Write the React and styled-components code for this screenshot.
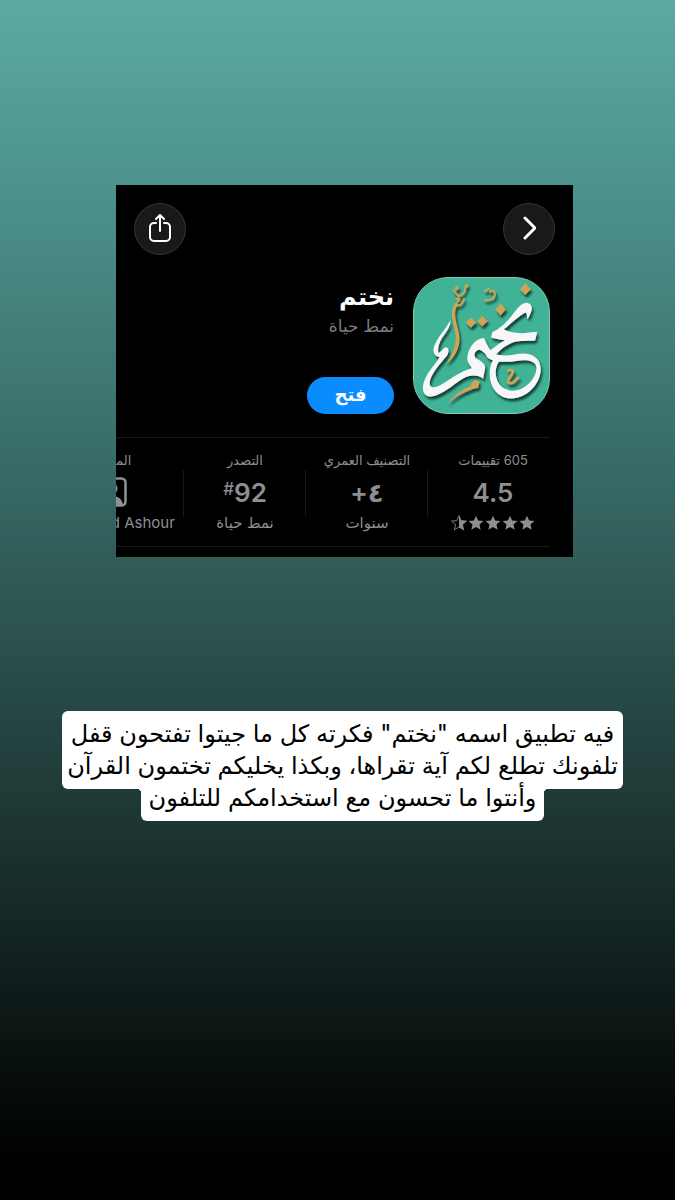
import React from "react";
import styled, { createGlobalStyle } from "styled-components";

const colors = {
  card: "#000000",
  label: "#8e8e93",
  muted: "#7c7c80",
  line: "#1a1a1c",
  blue: "#0a8cff",
  green: "#40b396",
  gold: "#d0a354",
};

const starPath =
  "M12 1l3.2 7.4 8 .7-6 5.3 1.8 7.9L12 18.1l-7 4.2 1.8-7.9-6-5.3 8-.7z";

const Star = ({ half }) => (
  <svg width="16" height="16" viewBox="0 0 24 24" aria-hidden="true">
    {half ? (
      <>
        <path d={starPath} fill="none" stroke={colors.label} strokeWidth="1.3" />
        <path d="M12 1l3.2 7.4 8 .7-6 5.3 1.8 7.9L12 18.1z" fill={colors.label} />
      </>
    ) : (
      <path d={starPath} fill={colors.label} />
    )}
  </svg>
);

const ShareIcon = () => (
  <svg width="28" height="32" viewBox="0 0 28 32" fill="none" stroke="#fff" strokeWidth="2" strokeLinecap="round" strokeLinejoin="round" aria-hidden="true">
    <path d="M10 11H8a4 4 0 0 0-4 4v10a4 4 0 0 0 4 4h12a4 4 0 0 0 4-4V15a4 4 0 0 0-4-4h-2" />
    <path d="M14 19V3M10 7l4-4 4 4" />
  </svg>
);

const ChevronIcon = () => (
  <svg width="14" height="24" viewBox="0 0 14 24" fill="none" stroke="#fff" strokeWidth="3" strokeLinecap="round" strokeLinejoin="round" aria-hidden="true">
    <path d="M3 2l10 10L3 22" />
  </svg>
);

const DeveloperIcon = () => (
  <svg width="30" height="30" viewBox="0 0 30 30" aria-hidden="true">
    <rect x="1.5" y="1.5" width="27" height="27" rx="4" fill="none" stroke={colors.label} strokeWidth="2.6" />
    <circle cx="15" cy="11.5" r="5.5" fill={colors.label} />
    <path d="M4 28c1-7 6-9 11-9s10 2 11 9z" fill={colors.label} />
  </svg>
);

const LogoArt = () => (
  <svg width="100%" height="100%" viewBox="0 0 410 410" aria-hidden="true">
    <defs>
      <filter id="relief" x="-10%" y="-10%" width="125%" height="125%">
        <feDropShadow dx="5" dy="9" stdDeviation="4" floodColor="#0b3d32" floodOpacity="0.95" />
      </filter>
    </defs>
    <g filter="url(#relief)">
      <g transform="translate(-24 -22)" fill="#f7f7f8">
        <path d="M364 97C380 97 386 112 379 126C376 136 372 143 367 147C368 134 366 126 360 128C345 136 325 154 304 172L296 178C310 186 340 192 362 189C378 187 390 186 398 186L392 212C370 214 345 212 328 216C305 224 285 240 272 256L246 250C262 235 285 220 300 211C285 210 268 206 258 203L262 186C285 176 303 158 320 138C335 116 350 98 364 97Z" />
        <path d="M246 240C265 258 300 260 330 254C370 246 408 256 409 300C408 345 365 388 320 388C280 388 255 355 254 315C253 290 262 270 275 258L292 264C275 280 270 300 273 320C278 350 300 366 330 364C365 360 395 325 396 295C395 275 370 268 335 274C295 280 255 276 244 260Z" />
        <path d="M134 150C136 168 122 186 112 200C98 220 96 240 98 250C106 246 112 236 120 232C130 232 132 246 124 258C108 278 78 308 72 336C68 356 86 358 106 346C140 326 166 304 200 296C196 288 184 280 186 262C190 230 212 206 236 204C244 216 246 232 262 246L250 264C240 250 228 238 220 240C208 244 204 258 212 266C226 274 242 282 240 296L234 328C218 316 196 314 172 328C140 348 110 378 76 382C54 384 46 362 54 338C64 308 88 286 102 262C90 262 80 252 84 234C92 204 118 182 134 150Z" />
      </g>
    </g>
    <g filter="url(#relief)" fill={colors.gold} stroke={colors.gold} strokeLinecap="round" strokeLinejoin="round">
      <path d="M338 16l17 18-17 18-16-18zM263 77l16 19-16 18-16-18zM173 121l16 14-16 16-16-16zM207 115l17 16-17 16-15-16z" stroke="none" />
      <path d="M122 31l8-8 7 8-7 8zM151 24l8-7 7 7-7 9z" stroke="none" />
      <path d="M135 55c-4-5-10-10-14-18m17 18c8-7 18-8 17-22" fill="none" strokeWidth="6" />
      <path d="M128 64c8-4 13 2 7 6s-12 9-3 13 16-9 20-18" fill="none" strokeWidth="6" />
      <path d="M127 76c-18 15-12 50-3 86 9 38-6 66-27 99 37-28 47-62 38-100-10-37-16-62-2-78z" stroke="none" />
      <path d="M216 67c18 3 29-6 30-17 0-9-9-15-15-8m-15-2l11-7" fill="none" strokeWidth="6" />
      <path d="M287 281c6-6 17 2 12 9-4 7-17 20-12 27 7 8 22-4 29-14" fill="none" strokeWidth="8" />
      <path d="M185 310l14 4-4 20-16 2-8-13z" stroke="none" />
      <path d="M178 327c-22 5-51 21-79 57 35-32 59-38 88-51z" stroke="none" />
    </g>
  </svg>
);

const App = () => (
  <>
    <GlobalStyle />
    <Page>
      <StoreCard>
        <TopBar>
          <RoundButton type="button" aria-label="رجوع">
            <ChevronIcon />
          </RoundButton>
          <RoundButton type="button" aria-label="مشاركة">
            <ShareIcon />
          </RoundButton>
        </TopBar>

        <AppHeader>
          <Logo>
            <LogoArt />
          </Logo>
          <AppInfo>
            <AppName>نختم</AppName>
            <Category>نمط حياة</Category>
            <OpenButton type="button">فتح</OpenButton>
          </AppInfo>
        </AppHeader>

        <Stats>
          <Stat $width={130}>
            <StatLabel>605 تقييمات</StatLabel>
            <StatValue>4.5</StatValue>
            <Stars>
              <Star />
              <Star />
              <Star />
              <Star />
              <Star half />
            </Stars>
          </Stat>
          <Stat $width={122}>
            <StatLabel>التصنيف العمري</StatLabel>
            <StatValue>٤+</StatValue>
            <StatNote>سنوات</StatNote>
          </Stat>
          <Stat $width={122}>
            <StatLabel>التصدر</StatLabel>
            <StatValue dir="ltr">
              <Hash>#</Hash>92
            </StatValue>
            <StatNote>نمط حياة</StatNote>
          </Stat>
          <Stat $width={144}>
            <StatLabel>المطور</StatLabel>
            <StatValue>
              <DeveloperIcon />
            </StatValue>
            <StatNote dir="ltr">Mohamed Ashour</StatNote>
          </Stat>
        </Stats>
      </StoreCard>

      <Caption>
        <CaptionBlock>
          <CaptionLine>فيه تطبيق اسمه "نختم" فكرته كل ما جيتوا تفتحون قفل</CaptionLine>
          <CaptionLine>تلفونك تطلع لكم آية تقراها، وبكذا يخليكم تختمون القرآن</CaptionLine>
        </CaptionBlock>
        <CaptionTail>
          <CaptionLine>وأنتوا ما تحسون مع استخدامكم للتلفون</CaptionLine>
        </CaptionTail>
      </Caption>
    </Page>
  </>
);

const GlobalStyle = createGlobalStyle`
  * {
    box-sizing: border-box;
  }

  body {
    margin: 0;
    background: #000;
    font-family: Inter, "DejaVu Sans", sans-serif;
  }
`;

const Page = styled.main`
  direction: rtl;
  min-height: 100vh;
  padding: 185px 102px 0 116px;
  background: linear-gradient(
    #5baaa4 0%,
    #45837d 25%,
    #2e5753 50%,
    #172a28 75%,
    #000 97%
  );
`;

const StoreCard = styled.section`
  background: ${colors.card};
  padding: 18px 0 10px;
  overflow: hidden;
`;

const TopBar = styled.div`
  display: flex;
  justify-content: space-between;
  padding: 0 18px;
`;

const RoundButton = styled.button`
  display: flex;
  align-items: center;
  justify-content: center;
  width: 52px;
  height: 52px;
  padding: 0 0 2px;
  border: 1px solid #353536;
  border-radius: 50%;
  background: #19191a;
`;

const AppHeader = styled.div`
  display: flex;
  gap: 19px;
  padding: 22px 23px 0;
`;

const Logo = styled.div`
  flex: none;
  width: 137px;
  height: 137px;
  overflow: hidden;
  border: 1px solid #79cbb7;
  border-radius: 35px;
  background: ${colors.green};
`;

const AppInfo = styled.div`
  display: flex;
  flex-direction: column;
  align-items: flex-start;
`;

const AppName = styled.h1`
  margin: 4px 0 0;
  color: #fff;
  font-size: 24px;
  line-height: 32px;
  font-weight: 700;
`;

const Category = styled.p`
  margin: 0;
  color: ${colors.muted};
  font-size: 17px;
  line-height: 26px;
`;

const OpenButton = styled.button`
  width: 87px;
  height: 37px;
  margin-top: auto;
  padding: 0 0 2px;
  border: 0;
  border-radius: 19px;
  background: ${colors.blue};
  color: #fff;
  font-family: inherit;
  font-size: 18px;
  font-weight: 700;
`;

const Stats = styled.div`
  display: flex;
  margin: 23px 23px 0 0;
  padding: 11px 0 13px;
  border-top: 1px solid ${colors.line};
  border-bottom: 1px solid ${colors.line};
`;

const Stat = styled.div`
  position: relative;
  flex: 0 0 ${(props) => props.$width}px;
  display: flex;
  flex-direction: column;
  align-items: center;
  color: ${colors.label};
  white-space: nowrap;

  &:first-child {
    margin-right: -8px;
  }

  &:not(:first-child)::before {
    content: "";
    position: absolute;
    top: 21px;
    right: 0;
    width: 1px;
    height: 46px;
    background: ${colors.line};
  }
`;

const StatLabel = styled.div`
  font-size: 13px;
  line-height: 22px;
`;

const StatValue = styled.div`
  display: flex;
  align-items: center;
  height: 42px;
  font-size: 26px;
  font-weight: 600;
`;

const Hash = styled.span`
  align-self: flex-start;
  font-size: 17px;
  line-height: 36px;
  font-weight: 500;
`;

const StatNote = styled.div`
  font-size: 15px;
  line-height: 20px;
`;

const Stars = styled.div`
  display: flex;
  align-items: center;
  gap: 1px;
  height: 20px;
`;

const Caption = styled.div`
  display: flex;
  flex-direction: column;
  align-items: center;
  margin: 154px -50px 0 -54px;
  color: #000;
`;

const CaptionBlock = styled.p`
  width: 100%;
  margin: 0;
  padding: 7px 4px;
  border-radius: 6px;
  background: #fff;
`;

const CaptionTail = styled.p`
  position: relative;
  width: 403px;
  max-width: 100%;
  margin: -7px 0 0;
  padding: 0 4px 7px;
  border-radius: 0 0 6px 6px;
  background: #fff;

  /* rounded inner corners where the tail meets the block above */
  &::before,
  &::after {
    content: "";
    position: absolute;
    top: 7px;
    width: 4px;
    height: 4px;
  }

  &::before {
    right: 100%;
    background: radial-gradient(circle at 0 100%, transparent 4px, #fff 4px);
  }

  &::after {
    left: 100%;
    background: radial-gradient(circle at 100% 100%, transparent 4px, #fff 4px);
  }
`;

const CaptionLine = styled.span`
  display: block;
  font-size: 24px;
  line-height: 32px;
  text-align: center;
  white-space: nowrap;
`;

export default App;
